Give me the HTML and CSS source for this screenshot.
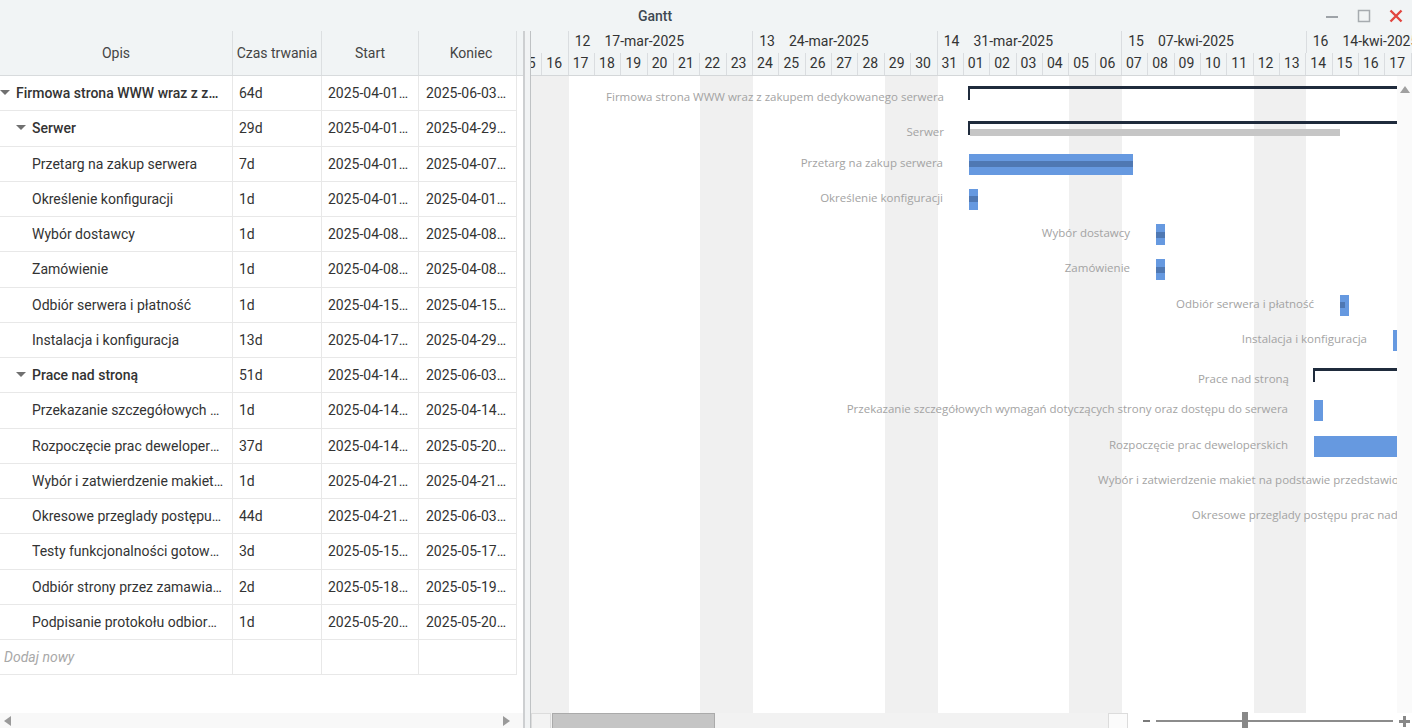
FILE: index.html
```html
<!DOCTYPE html>
<html lang="pl">
<head>
<meta charset="utf-8">
<title>Gantt</title>
<link rel="stylesheet" href="styles.css">
</head>
<body>
<div class="window">
  <header class="titlebar">
    <div class="title">Gantt</div>
    <div class="controls">
      <span class="ctl"><svg width="14" height="14" viewBox="0 0 14 14"><path d="M1 8h12" stroke="#9ea3a8" stroke-width="2"/></svg></span>
      <span class="ctl"><svg width="14" height="14" viewBox="0 0 14 14"><rect x="1.5" y="1.5" width="11" height="11" fill="none" stroke="#a6abaf" stroke-width="1.5"/></svg></span>
      <span class="ctl"><svg width="14" height="14" viewBox="0 0 14 14"><path d="M1.5 1.5l11 11M12.5 1.5l-11 11" stroke="#e2453f" stroke-width="2.4"/></svg></span>
    </div>
  </header>
  <div class="main">
    <section class="grid-pane">
      <div class="grid-head">
        <div class="hc c-desc">Opis</div>
        <div class="hc c-dur">Czas trwania</div>
        <div class="hc c-start">Start</div>
        <div class="hc c-end">Koniec</div>
      </div>
      <div class="grid-body">
        <div class="row sum">
          <div class="c c-desc lv0"><span class="caret"></span><span class="txt">Firmowa strona WWW wraz z zakupem dedykowanego serwera</span></div>
          <div class="c c-dur">64d</div><div class="c c-start">2025-04-01 08:00</div><div class="c c-end">2025-06-03 16:00</div>
        </div>
        <div class="row sum">
          <div class="c c-desc lv1"><span class="caret"></span><span class="txt">Serwer</span></div>
          <div class="c c-dur">29d</div><div class="c c-start">2025-04-01 08:00</div><div class="c c-end">2025-04-29 16:00</div>
        </div>
        <div class="row">
          <div class="c c-desc lv2"><span class="txt">Przetarg na zakup serwera</span></div>
          <div class="c c-dur">7d</div><div class="c c-start">2025-04-01 08:00</div><div class="c c-end">2025-04-07 16:00</div>
        </div>
        <div class="row">
          <div class="c c-desc lv2"><span class="txt">Określenie konfiguracji</span></div>
          <div class="c c-dur">1d</div><div class="c c-start">2025-04-01 08:00</div><div class="c c-end">2025-04-01 16:00</div>
        </div>
        <div class="row">
          <div class="c c-desc lv2"><span class="txt">Wybór dostawcy</span></div>
          <div class="c c-dur">1d</div><div class="c c-start">2025-04-08 08:00</div><div class="c c-end">2025-04-08 16:00</div>
        </div>
        <div class="row">
          <div class="c c-desc lv2"><span class="txt">Zamówienie</span></div>
          <div class="c c-dur">1d</div><div class="c c-start">2025-04-08 08:00</div><div class="c c-end">2025-04-08 16:00</div>
        </div>
        <div class="row">
          <div class="c c-desc lv2"><span class="txt">Odbiór serwera i płatność</span></div>
          <div class="c c-dur">1d</div><div class="c c-start">2025-04-15 08:00</div><div class="c c-end">2025-04-15 16:00</div>
        </div>
        <div class="row">
          <div class="c c-desc lv2"><span class="txt">Instalacja i konfiguracja</span></div>
          <div class="c c-dur">13d</div><div class="c c-start">2025-04-17 08:00</div><div class="c c-end">2025-04-29 16:00</div>
        </div>
        <div class="row sum">
          <div class="c c-desc lv1"><span class="caret"></span><span class="txt">Prace nad stroną</span></div>
          <div class="c c-dur">51d</div><div class="c c-start">2025-04-14 08:00</div><div class="c c-end">2025-06-03 16:00</div>
        </div>
        <div class="row">
          <div class="c c-desc lv2"><span class="txt">Przekazanie szczegółowych wymagań dotyczących strony oraz dostępu do serwera</span></div>
          <div class="c c-dur">1d</div><div class="c c-start">2025-04-14 08:00</div><div class="c c-end">2025-04-14 16:00</div>
        </div>
        <div class="row">
          <div class="c c-desc lv2"><span class="txt">Rozpoczęcie prac deweloperskich</span></div>
          <div class="c c-dur">37d</div><div class="c c-start">2025-04-14 08:00</div><div class="c c-end">2025-05-20 16:00</div>
        </div>
        <div class="row">
          <div class="c c-desc lv2"><span class="txt">Wybór i zatwierdzenie makiet na podstawie przedstawionych projektów</span></div>
          <div class="c c-dur">1d</div><div class="c c-start">2025-04-21 08:00</div><div class="c c-end">2025-04-21 16:00</div>
        </div>
        <div class="row">
          <div class="c c-desc lv2"><span class="txt">Okresowe przeglady postępu prac nad projektem</span></div>
          <div class="c c-dur">44d</div><div class="c c-start">2025-04-21 08:00</div><div class="c c-end">2025-06-03 16:00</div>
        </div>
        <div class="row">
          <div class="c c-desc lv2"><span class="txt">Testy funkcjonalności gotowej strony</span></div>
          <div class="c c-dur">3d</div><div class="c c-start">2025-05-15 08:00</div><div class="c c-end">2025-05-17 16:00</div>
        </div>
        <div class="row">
          <div class="c c-desc lv2"><span class="txt">Odbiór strony przez zamawiającego</span></div>
          <div class="c c-dur">2d</div><div class="c c-start">2025-05-18 08:00</div><div class="c c-end">2025-05-19 16:00</div>
        </div>
        <div class="row">
          <div class="c c-desc lv2"><span class="txt">Podpisanie protokołu odbioru strony</span></div>
          <div class="c c-dur">1d</div><div class="c c-start">2025-05-20 08:00</div><div class="c c-end">2025-05-20 16:00</div>
        </div>
        <div class="row add">
          <div class="c c-desc"><span class="txt">Dodaj nowy</span></div>
          <div class="c c-dur"></div><div class="c c-start"></div><div class="c c-end"></div>
        </div>
      </div>
      <div class="hbar-left"><span class="arr arr-l"></span><span class="arr arr-r"></span></div>
    </section>
    <div class="splitter"></div>
    <section class="chart-pane">
      <div class="chart-head">
        <div class="scale">
          <div class="weeks">
            <div class="wk part"></div>
            <div class="wk"><span>12</span><span>17-mar-2025</span></div>
            <div class="wk"><span>13</span><span>24-mar-2025</span></div>
            <div class="wk"><span>14</span><span>31-mar-2025</span></div>
            <div class="wk"><span>15</span><span>07-kwi-2025</span></div>
            <div class="wk"><span>16</span><span>14-kwi-2025</span></div>
          </div>
          <div class="days">
            <div class="dy">15</div><div class="dy">16</div><div class="dy">17</div><div class="dy">18</div><div class="dy">19</div><div class="dy">20</div><div class="dy">21</div><div class="dy">22</div><div class="dy">23</div><div class="dy">24</div><div class="dy">25</div><div class="dy">26</div><div class="dy">27</div><div class="dy">28</div><div class="dy">29</div><div class="dy">30</div><div class="dy">31</div><div class="dy">01</div><div class="dy">02</div><div class="dy">03</div><div class="dy">04</div><div class="dy">05</div><div class="dy">06</div><div class="dy">07</div><div class="dy">08</div><div class="dy">09</div><div class="dy">10</div><div class="dy">11</div><div class="dy">12</div><div class="dy">13</div><div class="dy">14</div><div class="dy">15</div><div class="dy">16</div><div class="dy">17</div><div class="dy">18</div>
          </div>
        </div>
      </div>
      <div class="chart-mid">
        <div class="chart-body">
          <div class="daycols">
            <div class="dc we"></div><div class="dc we"></div><div class="dc"></div><div class="dc"></div><div class="dc"></div><div class="dc"></div><div class="dc"></div><div class="dc we"></div><div class="dc we"></div><div class="dc"></div><div class="dc"></div><div class="dc"></div><div class="dc"></div><div class="dc"></div><div class="dc we"></div><div class="dc we"></div><div class="dc"></div><div class="dc"></div><div class="dc"></div><div class="dc"></div><div class="dc"></div><div class="dc we"></div><div class="dc we"></div><div class="dc"></div><div class="dc"></div><div class="dc"></div><div class="dc"></div><div class="dc"></div><div class="dc we"></div><div class="dc we"></div><div class="dc"></div><div class="dc"></div><div class="dc"></div><div class="dc"></div><div class="dc"></div>
          </div>
          <div class="grows">
            <div class="grow"><div class="br" style="left:437px;width:600px"><span class="lbl">Firmowa strona WWW wraz z zakupem dedykowanego serwera</span></div></div>
            <div class="grow"><div class="br" style="left:437px;width:600px"><span class="lbl">Serwer</span></div><div class="base" style="left:439px;width:370px"></div></div>
            <div class="grow"><div class="bar" style="left:438px;width:164px"><span class="prog" style="width:164px"></span><span class="lbl">Przetarg na zakup serwera</span></div></div>
            <div class="grow"><div class="bar" style="left:438px;width:8.5px"><span class="prog" style="width:8.5px"></span><span class="lbl">Określenie konfiguracji</span></div></div>
            <div class="grow"><div class="bar" style="left:625px;width:8.5px"><span class="prog" style="width:8.5px"></span><span class="lbl">Wybór dostawcy</span></div></div>
            <div class="grow"><div class="bar" style="left:625px;width:8.5px"><span class="prog" style="width:8.5px"></span><span class="lbl">Zamówienie</span></div></div>
            <div class="grow"><div class="bar" style="left:809px;width:8.5px"><span class="prog" style="width:5px"></span><span class="lbl">Odbiór serwera i płatność</span></div></div>
            <div class="grow"><div class="bar" style="left:862px;width:8.5px"><span class="lbl">Instalacja i konfiguracja</span></div></div>
            <div class="grow"><div class="br" style="left:782px;width:300px"><span class="lbl">Prace nad stroną</span></div></div>
            <div class="grow"><div class="bar" style="left:783px;width:8.5px"><span class="lbl">Przekazanie szczegółowych wymagań dotyczących strony oraz dostępu do serwera</span></div></div>
            <div class="grow"><div class="bar" style="left:783px;width:300px"><span class="lbl">Rozpoczęcie prac deweloperskich</span></div></div>
            <div class="grow"><div class="bar" style="left:976px;width:8.5px"><span class="lbl">Wybór i zatwierdzenie makiet na podstawie przedstawionych projektów</span></div></div>
            <div class="grow"><div class="bar" style="left:951px;width:300px"><span class="lbl">Okresowe przeglady postępu prac nad projektem</span></div></div>
            <div class="grow"></div>
            <div class="grow"></div>
            <div class="grow"></div>
          </div>
        </div>
        <div class="vscroll"><span class="arr-up"></span></div>
      </div>
      <div class="chart-foot">
        <div class="hs">
          <span class="hs-btn"></span>
          <span class="hs-thumb"></span>
          <span class="hs-track"></span>
          <span class="hs-btn r"></span>
        </div>
        <div class="zoom">
          <span class="z-minus"></span>
          <span class="z-track"><span class="z-thumb"></span></span>
          <span class="z-plus"></span>
        </div>
      </div>
    </section>
  </div>
</div>
</body>
</html>
```

FILE: styles.css
```css
* { box-sizing: border-box; }
html, body { margin: 0; padding: 0; }
body {
  width: 1412px;
  height: 728px;
  overflow: hidden;
  background: #fff;
  font-family: Roboto, "Liberation Sans", sans-serif;
  font-size: 14px;
  color: #333;
}
.window {
  --d: 26.357px;
  width: 1412px;
  height: 728px;
  display: flex;
  flex-direction: column;
}

/* title bar */
.titlebar {
  height: 31px;
  flex: none;
  background: #f1f4f5;
  display: flex;
  align-items: center;
}
.title {
  flex: 1;
  text-align: center;
  font-weight: 500;
  color: #3e4852;
  padding: 1px 6px 0 0;
}
.controls { display: flex; width: 96px; }
.ctl {
  width: 32px;
  height: 31px;
  display: flex;
  align-items: center;
  justify-content: center;
}

.main { flex: 1; display: flex; min-height: 0; }

/* left grid */
.grid-pane {
  width: 523px;
  flex: none;
  display: flex;
  flex-direction: column;
}
.grid-head {
  height: 45px;
  flex: none;
  background: #f1f4f5;
  border-bottom: 1px solid #d8dbdd;
  display: flex;
}
.hc {
  display: flex;
  align-items: center;
  justify-content: center;
  color: #444;
  border-right: 1px solid #dcdfe1;
  white-space: nowrap;
}
.c-desc { width: 233px; flex: none; }
.c-dur { width: 89px; flex: none; }
.c-start { width: 97px; flex: none; }
.c-end { width: 98px; flex: none; }

.grid-body { flex: 1; background: #fff; }
.row {
  width: 517px;
  height: 35.25px;
  display: flex;
  border-bottom: 1px solid #e8e8e8;
}
.c {
  border-right: 1px solid #e8e8e8;
  white-space: nowrap;
  overflow: hidden;
  text-overflow: ellipsis;
  line-height: 34px;
  padding: 0 7px 0 6px;
}
.c-end { padding-left: 7px; }
.c.c-desc {
  display: flex;
  align-items: center;
  padding: 0 8px 0 0;
}
.c-desc.lv1 { padding-left: 16px; }
.c-desc.lv2 { padding-left: 32px; }
.caret {
  width: 16px;
  flex: none;
  height: 6px;
  position: relative;
}
.caret::before {
  content: "";
  position: absolute;
  left: 0;
  top: 0;
  border-left: 5.5px solid transparent;
  border-right: 5.5px solid transparent;
  border-top: 5.5px solid #707070;
}
.txt {
  flex: 1;
  min-width: 0;
  overflow: hidden;
  text-overflow: ellipsis;
  white-space: nowrap;
}
.sum .txt { font-weight: 500; }
.add .c.c-desc { padding-left: 4px; }
.add .txt { font-style: italic; color: #a8a8a8; }

.hbar-left {
  height: 15px;
  flex: none;
  background: #f8f8f8;
  display: flex;
  align-items: center;
  justify-content: space-between;
  padding: 0 13px 0 4px;
}
.arr { width: 0; height: 0; border-top: 5px solid transparent; border-bottom: 5px solid transparent; }
.arr-l { border-right: 7px solid #9a9a9a; }
.arr-r { border-left: 7px solid #9a9a9a; }

.splitter {
  width: 8px;
  flex: none;
  background: #f1f3f4;
  border-left: 2px solid #cdcfd1;
  border-right: 1px solid #bfc2c4;
}

/* chart */
.chart-pane {
  flex: 1;
  min-width: 0;
  display: flex;
  flex-direction: column;
}
.chart-head {
  height: 45px;
  flex: none;
  background: #f1f4f5;
  border-bottom: 1px solid #d4d7d9;
  overflow: hidden;
}
.scale { margin-left: -15px; width: max-content; }
.weeks, .days { display: flex; height: 22px; }
.wk {
  width: calc(var(--d) * 7);
  flex: none;
  border-right: 1px solid #dadde0;
  display: flex;
  align-items: center;
  gap: 14px;
  padding: 0 0 3px 6px;
  white-space: nowrap;
  overflow: hidden;
}
.wk.part { width: calc(var(--d) * 2); }
.days .dy {
  width: var(--d);
  flex: none;
  border-right: 1px solid #dadde0;
  padding-left: 4px;
  line-height: 20px;
  white-space: nowrap;
  overflow: hidden;
}

.chart-mid { flex: 1; display: flex; min-height: 0; }
.chart-body {
  flex: 1;
  min-width: 0;
  overflow: hidden;
  display: grid;
  grid-template: 1fr / 1fr;
}
.daycols, .grows { grid-area: 1 / 1; }
.daycols { display: flex; margin-left: -15px; }
.dc { width: var(--d); flex: none; }
.dc.we { background: #f0f0f0; }

.grow { height: 35.25px; position: relative; }
.bar {
  position: absolute;
  top: 7px;
  height: 21px;
  background: #6699e0;
}
.prog {
  position: absolute;
  left: 0;
  top: 7.5px;
  height: 6px;
  background: #4f78b3;
}
.br {
  position: absolute;
  top: 9.5px;
  height: 14px;
  border-top: 3px solid #1f2b3c;
  border-left: 2px solid #1f2b3c;
}
.base {
  position: absolute;
  top: 17.75px;
  height: 7px;
  background: #c6c6c6;
}
.lbl {
  position: absolute;
  right: calc(100% + 26px);
  top: 1px;
  white-space: nowrap;
  font-family: "Open Sans", "Noto Sans", sans-serif;
  font-size: 11.5px;
  line-height: 16px;
  color: #a3a3a3;
}
.br .lbl { top: 0; }

.vscroll {
  width: 15px;
  flex: none;
  background: #fafafa;
  display: flex;
  justify-content: center;
  padding-top: 10px;
}
.arr-up {
  width: 0;
  height: 0;
  border-left: 5.5px solid transparent;
  border-right: 5.5px solid transparent;
  border-bottom: 7.5px solid #a0a0a0;
}

.chart-foot { height: 15px; flex: none; display: flex; }
.hs { width: 597px; flex: none; display: flex; background: #f2f2f2; }
.hs-btn { width: 20px; flex: none; border: 1px solid #dcdcdc; border-bottom: 0; background: #f3f3f3; }
.hs-btn.r { background: #fbfbfb; }
.hs-thumb {
  width: 163px;
  flex: none;
  margin-left: 1px;
  background: #c5c5c5;
  border: 1px solid #aaaaaa;
  border-bottom: 0;
}
.hs-track { flex: 1; }
.zoom { flex: 1; display: flex; align-items: center; background: #fff; }
.z-minus {
  width: 7px;
  height: 2.5px;
  background: #7a7a7a;
  margin-left: 15px;
  margin-top: 1px;
}
.z-track {
  width: 237px;
  height: 1.5px;
  background: #8c8c8c;
  margin-left: 6px;
  margin-top: 1px;
  position: relative;
}
.z-thumb {
  position: absolute;
  left: 86px;
  top: -8px;
  width: 6px;
  height: 16px;
  background: #888;
}
.z-plus {
  width: 11px;
  height: 11px;
  margin-left: 6px;
  margin-top: 1px;
  background:
    linear-gradient(#888, #888) center / 11px 3px no-repeat,
    linear-gradient(#888, #888) center / 3px 11px no-repeat;
}
```
